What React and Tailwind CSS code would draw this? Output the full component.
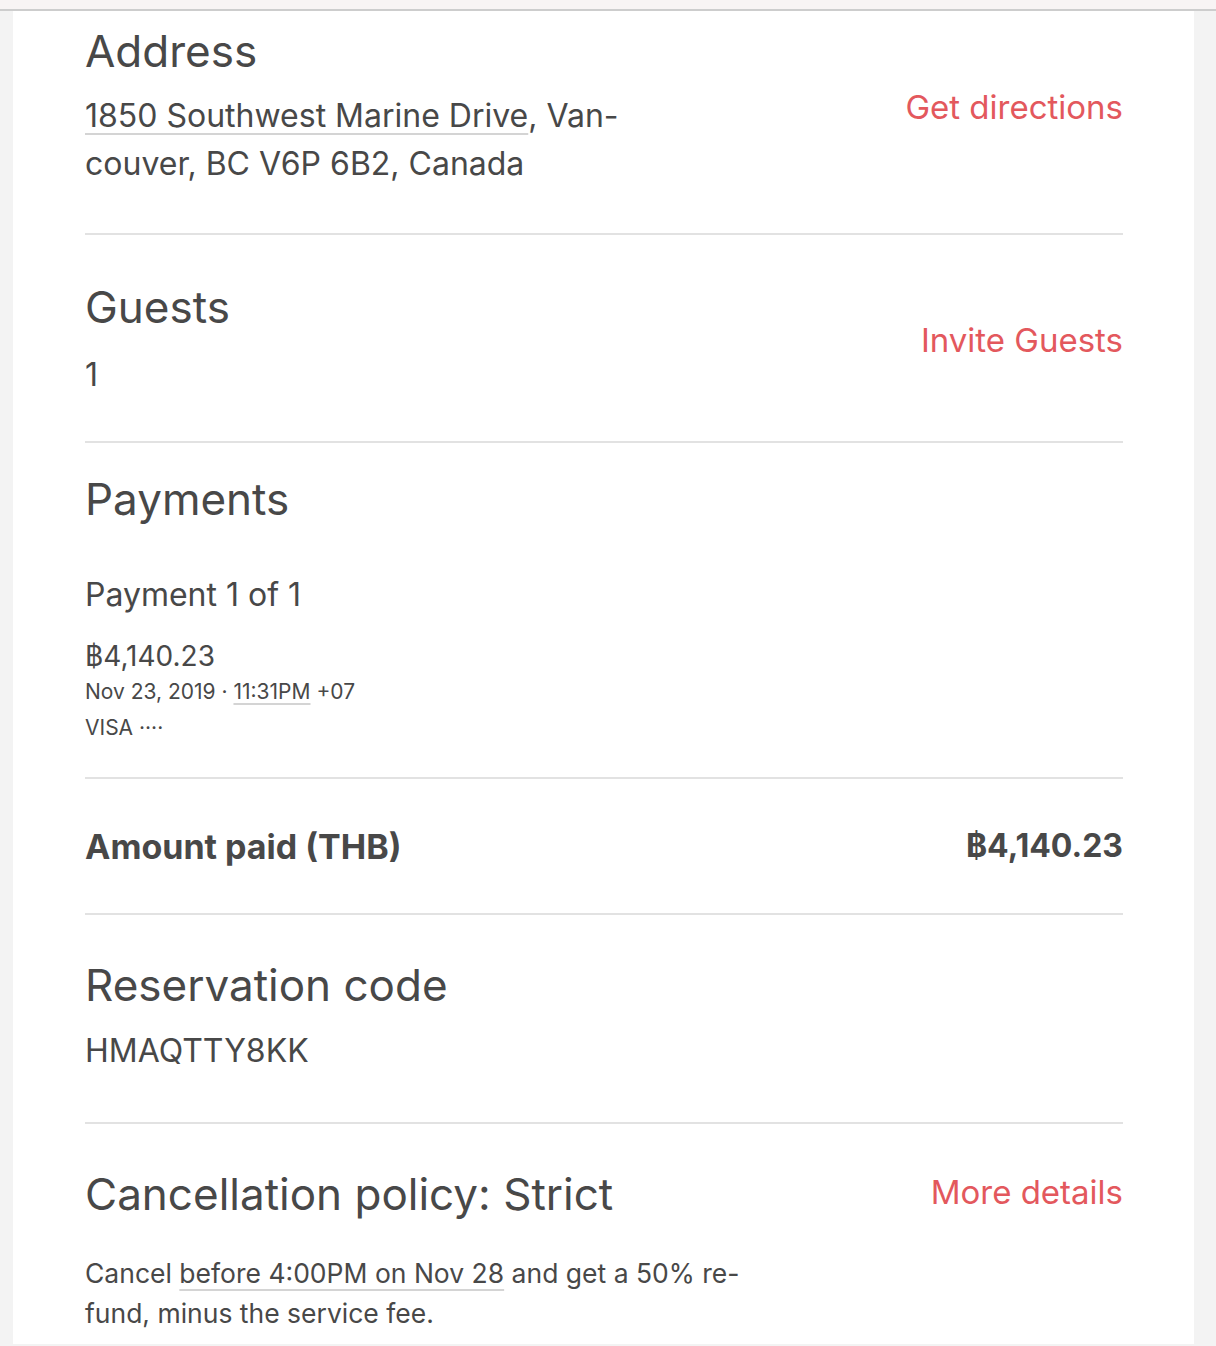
const red = 'text-[#e3585d]'

function Divider() {
  return <div className="h-[2px] bg-[#e2e2e2]" />
}

function Link({ children }) {
  return (
    <span className="underline decoration-[#d4d4d4] decoration-2 underline-offset-[6px]">{children}</span>
  )
}

export default function App() {
  return (
    <div className="min-h-[1346px] bg-[#f3f3f3] text-[#484848]" style={{ fontFamily: 'Inter, "Noto Sans", sans-serif' }}>
      <div className="h-[11px] bg-[#f8f4f4] border-b-2 border-[#cdcdcd]" />
      <div className="ml-[13px] mr-[22px] bg-white min-h-[1333px] pl-[72px] pr-[71px]">
        {/* address */}
        <section className="h-[222px] pt-[14px] flex justify-between">
          <div>
            <h2 className="text-[44px] leading-[52px] font-normal">Address</h2>
            <p className="mt-[15px] text-[32px] leading-[48px] whitespace-nowrap">
              <Link>1850 Southwest Marine Drive</Link>, Van-<br />couver, BC V6P 6B2, Canada
            </p>
          </div>
          <div className={`${red} text-[33px] leading-[40px] pt-[62px]`}>Get directions</div>
        </section>
        <Divider />

        {/* guests */}
        <section className="h-[206px] pt-[46px] flex justify-between">
          <div>
            <h2 className="text-[44px] leading-[52px]">Guests</h2>
            <p className="mt-[22px] text-[32px] leading-[40px]">1</p>
          </div>
          <div className={`${red} text-[33px] leading-[40px] pt-[39px]`}>Invite Guests</div>
        </section>
        <Divider />

        {/* payments */}
        <section className="h-[334px] pt-[30px]">
          <h2 className="text-[44px] leading-[52px]">Payments</h2>
          <p className="mt-[48px] text-[32px] leading-[44px]">Payment 1 of 1</p>
          <p className="mt-[21px] text-[28px] leading-[36px]">฿4,140.23</p>
          <p className="text-[21px] leading-[36px]">
            Nov 23, 2019 · <span className="underline decoration-[#d4d4d4] decoration-2 underline-offset-4">11:31PM</span> +07
          </p>
          <p className="text-[21px] leading-[36px]">VISA ····</p>
        </section>
        <Divider />

        {/* amount */}
        <section className="h-[134px] flex items-center justify-between font-bold">
          <span className="text-[34px]">Amount paid (THB)</span>
          <span className="text-[32px]">฿4,140.23</span>
        </section>
        <Divider />

        {/* reservation */}
        <section className="h-[207px] pt-[44px]">
          <h2 className="text-[44px] leading-[52px]">Reservation code</h2>
          <p className="mt-[20px] text-[32px] leading-[40px]">HMAQTTY8KK</p>
        </section>
        <Divider />

        {/* cancellation */}
        <section className="pt-[44px]">
          <div className="flex justify-between">
            <h2 className="text-[44px] leading-[52px]">Cancellation policy: Strict</h2>
            <div className={`${red} text-[33px] leading-[40px] pt-[4px]`}>More details</div>
          </div>
          <p className="mt-[33px] text-[26.5px] leading-[40px] whitespace-nowrap">
            Cancel <Link>before 4:00PM on Nov 28</Link> and get a 50% re-<br />fund, minus the service fee.
          </p>
        </section>
      </div>
    </div>
  )
}
